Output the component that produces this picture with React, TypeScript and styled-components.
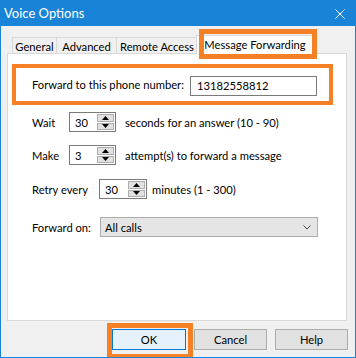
import styled, { createGlobalStyle } from "styled-components";

const GlobalStyle = createGlobalStyle`
  html, body {
    margin: 0;
    padding: 0;
    background: #ffffff;
  }
  body {
    font-family: Lato, "Noto Sans", sans-serif;
    font-size: 11.2px;
    color: #000;
  }
`;

const ORANGE = "#f58025";
const BLUE = "#1883d7";

const Tab = ({ label, w, active }: { label: string; w: number; active?: boolean }) => (
  <TabItem $w={w} $active={active}>
    {label}
  </TabItem>
);

const Spinner = ({ value, w }: { value: string; w: number }) => (
  <SpinBox $w={w}>
    <SpinValue>{value}</SpinValue>
    <SpinButtons>
      <SpinButton>
        <svg width="7" height="4" viewBox="0 0 7 4">
          <path d="M3.5 0 L7 4 L0 4 Z" fill="#000" />
        </svg>
      </SpinButton>
      <SpinButton>
        <svg width="7" height="4" viewBox="0 0 7 4">
          <path d="M0 0 L7 0 L3.5 4 Z" fill="#000" />
        </svg>
      </SpinButton>
    </SpinButtons>
  </SpinBox>
);

export default function App() {
  return (
    <>
      <GlobalStyle />
      <Frame>
        <TitleBar>
          <Title>Voice Options</Title>
          <svg width="10" height="10" viewBox="0 0 10 10">
            <path d="M0.5 0.5 L9.5 9.5 M9.5 0.5 L0.5 9.5" stroke="#fff" strokeWidth="1" />
          </svg>
        </TitleBar>
        <Body>
          <Tabs>
            <Tab label="General" w={45} />
            <Tab label="Advanced" w={61} />
            <Tab label="Remote Access" w={82} />
            <Tab label="Message Forwarding" w={118} active />
          </Tabs>
          <Panel>
            <PhoneBox>
              <Label $w={158}>Forward to this phone number:</Label>
              <TextInput>13182558812</TextInput>
            </PhoneBox>

            <Row $top={7}>
              <Label $w={37}>Wait</Label>
              <Spinner value="30" w={47} />
              <Hint $gap={9}>seconds for an answer (10 - 90)</Hint>
            </Row>

            <Row $top={13}>
              <Label $w={37}>Make</Label>
              <Spinner value="3" w={47} />
              <Hint $gap={9}>attempt(s) to forward a message</Hint>
            </Row>

            <Row $top={14}>
              <Label $w={67}>Retry every</Label>
              <Spinner value="30" w={48} />
              <Hint $gap={5}>minutes (1 - 300)</Hint>
            </Row>

            <Row $top={18}>
              <Label $w={68}>Forward on:</Label>
              <Select>
                <span>All calls</span>
                <svg width="8" height="5" viewBox="0 0 8 5">
                  <path d="M0.5 0.5 L4 4 L7.5 0.5" stroke="#444" strokeWidth="1" fill="none" />
                </svg>
              </Select>
            </Row>
          </Panel>
          <Footer>
            <DialogButton $primary>OK</DialogButton>
            <DialogButton>Cancel</DialogButton>
            <DialogButton>Help</DialogButton>
          </Footer>
        </Body>
      </Frame>
    </>
  );
}

const Frame = styled.div`
  width: 356px;
  height: 358px;
  box-sizing: border-box;
  border: 1px solid ${BLUE};
  background: #f0f0f0;
  display: flex;
  flex-direction: column;
  overflow: hidden;
`;

const TitleBar = styled.div`
  height: 25px;
  flex-shrink: 0;
  background: ${BLUE};
  color: #fff;
  display: flex;
  align-items: center;
  justify-content: space-between;
  padding: 0 10px 0 3px;
`;

const Title = styled.div`
  font-size: 13px;
  line-height: 1;
  margin-top: -1px;
`;

const Body = styled.div`
  flex: 1;
  display: flex;
  flex-direction: column;
  padding: 11px 8px 0 6px;
`;

const Tabs = styled.div`
  display: flex;
  height: 16px;
  padding-left: 5px;
  position: relative;
  z-index: 1;
`;

const TabItem = styled.div<{ $w: number; $active?: boolean }>`
  width: ${({ $w }) => $w}px;
  box-sizing: border-box;
  display: flex;
  align-items: center;
  justify-content: center;
  white-space: nowrap;
  line-height: 1;
  border: 1px solid #d9d9d9;
  border-bottom: none;
  background: ${({ $active }) => ($active ? "#fff" : "#f0f0f0")};
  height: ${({ $active }) => ($active ? "19px" : "16px")};
  margin-top: ${({ $active }) => ($active ? "-2px" : "0")};
  margin-left: ${({ $active }) => ($active ? "-2px" : "-1px")};
  padding-top: ${({ $active }) => ($active ? "0" : "2px")};
  position: relative;

  &:first-child {
    margin-left: 0;
  }

  ${({ $active }) =>
    $active &&
    `
    &::after {
      content: "";
      position: absolute;
      left: 2px;
      top: -7px;
      width: 118px;
      height: 30px;
      box-sizing: border-box;
      border: 5px solid ${ORANGE};
    }
  `}
`;

const Panel = styled.div`
  flex: 1;
  background: #fff;
  border: 1px solid #d9d9d9;
  display: flex;
  flex-direction: column;
`;

const PhoneBox = styled.div`
  margin: 10px 0 0 4px;
  width: 321px;
  height: 41px;
  box-sizing: border-box;
  border: 4px solid ${ORANGE};
  display: flex;
  align-items: center;
  padding-left: 16px;
`;

const Label = styled.div<{ $w: number }>`
  width: ${({ $w }) => $w}px;
  flex-shrink: 0;
  white-space: nowrap;
`;

const TextInput = styled.div`
  width: 127px;
  height: 20px;
  box-sizing: border-box;
  border: 1px solid #7a7a7a;
  padding-left: 6px;
  display: flex;
  align-items: center;
  margin-top: 2px;
`;

const Row = styled.div<{ $top: number }>`
  display: flex;
  align-items: center;
  height: 20px;
  margin-top: ${({ $top }) => $top}px;
  padding-left: 24px;
`;

const SpinBox = styled.div<{ $w: number }>`
  width: ${({ $w }) => $w}px;
  height: 20px;
  box-sizing: border-box;
  border: 1px solid #7a7a7a;
  display: flex;
  align-items: stretch;
`;

const SpinValue = styled.div`
  flex: 1;
  display: flex;
  align-items: center;
  padding-left: 5px;
`;

const SpinButtons = styled.div`
  width: 17px;
  display: flex;
  flex-direction: column;
  gap: 1px;
  padding: 1px 1px 1px 0;
`;

const SpinButton = styled.div`
  flex: 1;
  background: #e1e1e1;
  border: 1px solid #adadad;
  display: flex;
  align-items: center;
  justify-content: center;
`;

const Hint = styled.div<{ $gap: number }>`
  margin-left: ${({ $gap }) => $gap}px;
  white-space: nowrap;
`;

const Select = styled.div`
  width: 218px;
  height: 20px;
  box-sizing: border-box;
  background: #e5e5e5;
  border: 1px solid #adadad;
  display: flex;
  align-items: center;
  justify-content: space-between;
  padding: 0 6px 0 4px;
`;

const Footer = styled.div`
  display: flex;
  justify-content: flex-end;
  gap: 8px;
  padding: 8px 0 7px;
  margin-right: -1px;
`;

const DialogButton = styled.div<{ $primary?: boolean }>`
  width: 73px;
  height: 21px;
  box-sizing: border-box;
  display: flex;
  align-items: center;
  justify-content: center;
  background: ${({ $primary }) => ($primary ? "#e5f1fb" : "#e1e1e1")};
  border: 1px solid ${({ $primary }) => ($primary ? "#0078d7" : "#adadad")};
  position: relative;

  ${({ $primary }) =>
    $primary &&
    `
    width: 74px;
    &::after {
      content: "";
      position: absolute;
      left: -6px;
      top: -7px;
      width: 86px;
      height: 36px;
      box-sizing: border-box;
      border: 5px solid ${ORANGE};
    }
  `}
`;
